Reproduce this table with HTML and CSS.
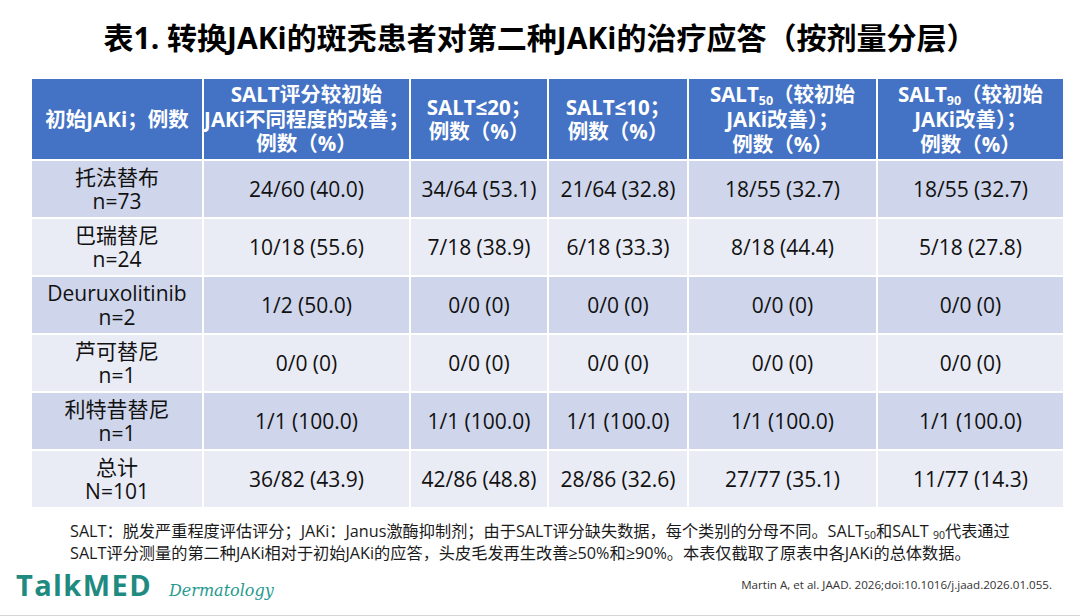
FILE: index.html
```html
<!DOCTYPE html>
<html lang="zh">
<head>
<meta charset="utf-8">
<link rel="stylesheet" href="styles.css">
</head>
<body>
<div class="page">
  <h1 class="title">表1. 转换JAKi的斑秃患者对第二种JAKi的治疗应答（按剂量分层）</h1>
  <table class="data">
    <colgroup>
      <col class="c1"><col class="c2"><col class="c3"><col class="c4"><col class="c5"><col class="c6">
    </colgroup>
    <thead>
      <tr>
        <th>初始JAKi；例数</th>
        <th>SALT评分较初始<br>JAKi不同程度的改善；<br>例数（%）</th>
        <th>SALT≤20；<br>例数（%）</th>
        <th>SALT≤10；<br>例数（%）</th>
        <th>SALT<sub>50</sub>（较初始<br>JAKi改善）；<br>例数（%）</th>
        <th>SALT<sub>90</sub>（较初始<br>JAKi改善）；<br>例数（%）</th>
      </tr>
    </thead>
    <tbody>
      <tr class="odd"><td>托法替布<br>n=73</td><td>24/60 (40.0)</td><td>34/64 (53.1)</td><td>21/64 (32.8)</td><td>18/55 (32.7)</td><td>18/55 (32.7)</td></tr>
      <tr class="even"><td>巴瑞替尼<br>n=24</td><td>10/18 (55.6)</td><td>7/18 (38.9)</td><td>6/18 (33.3)</td><td>8/18 (44.4)</td><td>5/18 (27.8)</td></tr>
      <tr class="odd"><td>Deuruxolitinib<br>n=2</td><td>1/2 (50.0)</td><td>0/0 (0)</td><td>0/0 (0)</td><td>0/0 (0)</td><td>0/0 (0)</td></tr>
      <tr class="even"><td>芦可替尼<br>n=1</td><td>0/0 (0)</td><td>0/0 (0)</td><td>0/0 (0)</td><td>0/0 (0)</td><td>0/0 (0)</td></tr>
      <tr class="odd"><td>利特昔替尼<br>n=1</td><td>1/1 (100.0)</td><td>1/1 (100.0)</td><td>1/1 (100.0)</td><td>1/1 (100.0)</td><td>1/1 (100.0)</td></tr>
      <tr class="even"><td>总计<br>N=101</td><td>36/82 (43.9)</td><td>42/86 (48.8)</td><td>28/86 (32.6)</td><td>27/77 (35.1)</td><td>11/77 (14.3)</td></tr>
    </tbody>
  </table>
  <p class="note">SALT：脱发严重程度评估评分；JAKi：Janus激酶抑制剂；由于SALT评分缺失数据，每个类别的分母不同。SALT<sub>50</sub>和SALT <sub>90</sub>代表通过<br>SALT评分测量的第二种JAKi相对于初始JAKi的应答，头皮毛发再生改善≥50%和≥90%。本表仅截取了原表中各JAKi的总体数据。</p>
  <div class="footer">
    <div class="logo"><span class="brand">TalkMED</span><span class="dept">Dermatology</span></div>
    <div class="cite">Martin A, et al. JAAD. 2026;doi:10.1016/j.jaad.2026.01.055.</div>
  </div>
</div>
</body>
</html>
```

FILE: styles.css
```css
html, body {
  margin: 0;
  padding: 0;
  background: #ffffff;
}
.page {
  width: 1080px;
  height: 616px;
  overflow: hidden;
  font-family: "Open Sans", "Noto Sans CJK SC", sans-serif;
  color: #111;
  display: flex;
  flex-direction: column;
  border-bottom: 1px solid #d6d6d6;
  box-sizing: border-box;
}
.title {
  margin: 0;
  padding-top: 19px;
  height: 59px;
  box-sizing: border-box;
  text-align: center;
  font-weight: 700;
  font-size: 30px;
  line-height: 38px;
  color: #000;
}
.data {
  margin: 18px 0 0 30px;
  width: 1033px;
  border-collapse: collapse;
  table-layout: fixed;
  font-size: 21px;
}
.data col.c1 { width: 172px; }
.data col.c2 { width: 207px; }
.data col.c3 { width: 138px; }
.data col.c4 { width: 140px; }
.data col.c5 { width: 189px; }
.data col.c6 { width: 187px; }
.data th, .data td {
  border: 2px solid #ffffff;
  text-align: center;
  vertical-align: middle;
  padding: 0;
}
.data th {
  background: #4472c4;
  color: #ffffff;
  font-weight: 700;
  font-size: 20.5px;
  line-height: 24.5px;
  height: 80px;
}
.data th sub {
  font-size: 12.5px;
  line-height: 1;
  vertical-align: -3px;
}
.data td {
  height: 56px;
  line-height: 24px;
  color: #111;
}
.data tr.odd td { background: #cfd5ea; }
.data tr.even td { background: #e9ebf5; }
.note {
  margin: 11px 0 0 70px;
  font-size: 16.2px;
  line-height: 22px;
  color: #1a1a1a;
}
.note sub {
  font-size: 10.5px;
  line-height: 1;
  vertical-align: -2px;
}
.footer {
  display: flex;
  justify-content: space-between;
  align-items: flex-end;
  margin-top: auto;
  padding: 0 28px 12px 16px;
}
.logo {
  display: flex;
  align-items: baseline;
  gap: 17px;
}
.brand {
  font-weight: 700;
  font-size: 29px;
  line-height: 36px;
  color: #1f8b80;
  letter-spacing: 1.4px;
}
.dept {
  font-family: "DejaVu Serif", serif;
  font-style: italic;
  font-size: 16px;
  color: #279a90;
}
.cite {
  font-size: 11.6px;
  line-height: 18px;
  color: #333;
  padding-bottom: 9px;
}
```
